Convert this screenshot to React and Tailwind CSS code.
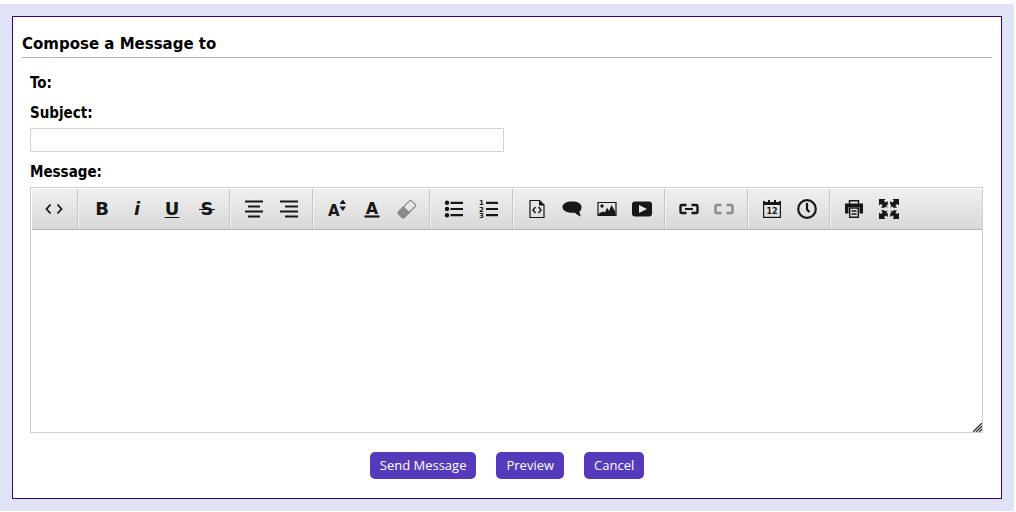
import React from "react";

const Icon = ({ children }) => (
  <svg viewBox="0 0 20 20" width="20" height="20" fill="none" stroke="currentColor" aria-hidden="true">
    {children}
  </svg>
);

const solid = { fill: "currentColor", stroke: "none" };

const arrow = "M0 0h6.500L5 1.800 6.600 3.600 8.800 2V5.500L7.500 6.500 8.800 8.800 6.500 7.500 5.500 8.800H2L3.600 6.600 1.800 5 0 6.500z";

const icons = {
  source: (
    <Icon>
      <path d="M6.500 5.500L2.500 10l4 4.500M13.500 5.500L17.500 10l-4 4.500" strokeWidth="1.800" />
    </Icon>
  ),
  center: (
    <Icon>
      <path d="M1 2.500h18M4 7.500h12M1 12.500h18M4 17.500h12" strokeWidth="2.200" />
    </Icon>
  ),
  right: (
    <Icon>
      <path d="M1 2.500h18M6 7.500h13M1 12.500h18M6 17.500h13" strokeWidth="2.200" />
    </Icon>
  ),
  size: (
    <Icon>
      <text x="1" y="17" {...solid} className="font-['DejaVu_Sans'] text-[15px] font-bold">A</text>
      <path d="M12.500 5l3.300-4.500L19 5zM12.500 7.500H19L15.800 12z" {...solid} />
    </Icon>
  ),
  color: (
    <Icon>
      <text x="10" y="15" textAnchor="middle" {...solid} className="font-['DejaVu_Sans'] text-[16px] font-bold">A</text>
      <path d="M2.500 17.500h15" strokeWidth="2.200" />
    </Icon>
  ),
  eraser: (
    <Icon>
      <g transform="rotate(-45 10 10)">
        <rect x="0.500" y="6" width="18.500" height="8" rx="1.800" strokeWidth="1.200" />
        <path d="M2.300 5.400H9.500v9.200H2.300Q0 14.600 0 12.500v-5Q0 5.400 2.300 5.400z" {...solid} />
      </g>
    </Icon>
  ),
  bullets: (
    <Icon>
      <path d="M6.500 3.800h12.500M6.500 10h12.500M6.500 16.200h12.500" strokeWidth="2.200" />
      <g {...solid}>
        <circle cx="3" cy="3.800" r="2.200" />
        <circle cx="3" cy="10" r="2.200" />
        <circle cx="3" cy="16.200" r="2.200" />
      </g>
    </Icon>
  ),
  numbers: (
    <Icon>
      <path d="M7 3.800h12M7 10h12M7 16.200h12" strokeWidth="2.200" />
      <g {...solid} className="font-['DejaVu_Sans'] text-[7px] font-bold">
        <text x="0" y="6">1</text>
        <text x="0" y="12.500">2</text>
        <text x="0" y="19">3</text>
      </g>
    </Icon>
  ),
  code: (
    <Icon>
      <path d="M3 1.500h9.500l4.500 4.500v12.500H3z" strokeWidth="1.200" />
      <path d="M12 1v5.500h5.500z" {...solid} />
      <path d="M8.500 8L6 11l2.500 3M11.500 8l2.500 3-2.500 3" strokeWidth="1.400" />
    </Icon>
  ),
  quote: (
    <Icon>
      <path d="M10 2.500c5.500 0 9.500 2 9.500 5.500 0 2-.7 3.500-2 4.500.2 2 .8 3.500 1.500 5-2.500-.7-4.500-2-6-3.700C6 14.300.5 12 .5 8c0-3.500 4-5.500 9.500-5.500z" {...solid} />
    </Icon>
  ),
  image: (
    <Icon>
      <path d="M1 3.500h18v13H1z" strokeWidth="1.200" />
      <circle cx="5" cy="7" r="1.700" {...solid} />
      <path d="M1.500 16v-1l2-1.500 3-1 1.500 1L10 8.500l2 3.500 2.500-6 4 7V16z" {...solid} />
    </Icon>
  ),
  video: (
    <Icon>
      <path fillRule="evenodd" d="M3 2.500h14a3 3 0 013 3v9a3 3 0 01-3 3H3a3 3 0 01-3-3v-9a3 3 0 013-3zM7 6v8l8-4z" {...solid} />
    </Icon>
  ),
  link: (
    <Icon>
      <path d="M7.500 6H3Q1.500 6 1.500 7.500v5Q1.500 14 3 14h4.500M12.500 6H17q1.500 0 1.500 1.500v5q0 1.500-1.500 1.500h-4.500" strokeWidth="2.400" />
      <path d="M6 10h8" strokeWidth="2" />
    </Icon>
  ),
  unlink: (
    <Icon>
      <path d="M7.500 6H3Q1.500 6 1.500 7.500v5Q1.500 14 3 14h4.500M12.500 6H17q1.500 0 1.500 1.500v5q0 1.500-1.500 1.500h-4.500" strokeWidth="2.400" />
    </Icon>
  ),
  date: (
    <Icon>
      <path d="M1.600 5v13.400h16.800V5" strokeWidth="1.200" />
      <path d="M1 2h2v1h3V1h2v2h4V1h2v2h3V2h2v4H1z" {...solid} />
      <text x="10" y="15" textAnchor="middle" {...solid} className="font-['DejaVu_Sans'] text-[8px] font-bold">12</text>
    </Icon>
  ),
  time: (
    <Icon>
      <circle cx="10" cy="10" r="8.800" strokeWidth="2.200" />
      <path d="M10 4v6.500l2.500 2.500" strokeWidth="2.200" />
    </Icon>
  ),
  print: (
    <Icon>
      <path d="M5.500 5V1.700h9V5" strokeWidth="1.400" />
      <path d="M1 4.500h18v10h-3.500V8h-11v6.500H1z" {...solid} />
      <path d="M5.700 9h8.600v9.300H5.700zM7.500 12h5M7.500 15h5" strokeWidth="1.400" />
    </Icon>
  ),
  maximize: (
    <Icon>
      <g {...solid}>
        <path d={arrow} />
        <path d={arrow} transform="rotate(90 10 10)" />
        <path d={arrow} transform="rotate(180 10 10)" />
        <path d={arrow} transform="rotate(270 10 10)" />
      </g>
    </Icon>
  ),
};

const groups = [
  { width: "w-[46px] pr-0.5", items: [["View source", icons.source]] },
  {
    width: "w-[152px] pl-0.5",
    items: [
      ["Bold", <span className="text-lg font-bold">B</span>],
      ["Italic", <span className="text-lg font-bold italic">i</span>],
      ["Underline", <span className="text-lg font-bold underline decoration-1 underline-offset-2">U</span>],
      ["Strikethrough", (
        <span className="relative text-lg font-bold">
          S<span className="absolute -inset-x-0.5 top-1/2 h-px bg-current" />
        </span>
      )],
    ],
  },
  { width: "w-[83px]", items: [["Center", icons.center], ["Align right", icons.right]] },
  { width: "w-[117px] pl-0.5", items: [["Font size", icons.size], ["Font color", icons.color], ["Remove formatting", icons.eraser, true]] },
  { width: "w-[83px]", items: [["Bullet list", icons.bullets], ["Ordered list", icons.numbers]] },
  { width: "w-[152px] pl-0.5", items: [["Code", icons.code], ["Quote", icons.quote], ["Insert image", icons.image], ["Insert video", icons.video]] },
  { width: "w-[83px]", items: [["Insert link", icons.link], ["Unlink", icons.unlink, true]] },
  { width: "w-[82px] pl-0.5", items: [["Insert date", icons.date], ["Insert time", icons.time]] },
  { width: "w-[82px]", items: [["Print", icons.print], ["Maximize", icons.maximize]] },
];

function Toolbar() {
  return (
    <div role="toolbar" aria-label="Formatting" className="flex flex-wrap rounded-t border-b border-[#b3b3b3] bg-linear-to-b from-[#f0f0f0] to-[#d8d8d8]">
      {groups.map((group, index) => (
        <div
          key={index}
          className={`flex h-10 justify-center border-r border-[#c5c5c5] shadow-[1px_0_0_#f5f5f5] last:border-r-0 last:shadow-none ${group.width}`}
        >
          {group.items.map(([name, glyph, dim]) => (
            <button
              key={name}
              type="button"
              aria-label={name}
              className={`flex w-[35px] shrink-0 items-center justify-center ${dim ? "text-[#8a8a8a]" : "text-[#171717]"}`}
            >
              {glyph}
            </button>
          ))}
        </div>
      ))}
    </div>
  );
}

function ActionButton({ children, type = "button" }) {
  return (
    <button type={type} className="h-[27px] rounded-[5px] bg-[#553abb] px-2.5 font-['Open_Sans',sans-serif] text-[13px] text-white">
      {children}
    </button>
  );
}

export default function App() {
  return (
    <div className="mt-1 mr-0.5 bg-[#e0e3f6] p-3 font-['DejaVu_Sans',sans-serif] text-black">
      <form className="border border-[#330099] bg-white px-[9px] pt-[15px] pb-[19px]" onSubmit={(event) => event.preventDefault()}>
        <h1 className="border-b border-[#b8b8b8] pb-px text-[15px] leading-6 font-bold">
          Compose a Message to
        </h1>
        <div className="pr-[9px] pl-2 text-[15px] leading-5 font-bold">
          <p className="mt-[15px] font-['DejaVu_Sans_Condensed','DejaVu_Sans',sans-serif]">To:</p>
          <label htmlFor="subject" className="mt-2.5 block font-['DejaVu_Sans_Condensed','DejaVu_Sans',sans-serif]">Subject:</label>
          <input id="subject" type="text" className="mt-[5px] block h-6 w-[474px] max-w-full border border-[#d3d3d3] bg-white px-1 font-normal outline-none" />
          <label htmlFor="message" className="mt-2.5 block font-['DejaVu_Sans_Condensed','DejaVu_Sans',sans-serif]">Message:</label>
          <div className="relative mt-[5px] border border-[#d0d0d0] pt-px pl-px">
            <Toolbar />
            <textarea id="message" className="block h-[202px] w-full resize-none bg-white p-2 font-normal outline-none" />
            <svg className="absolute right-0 bottom-0 text-[#333]" width="9" height="9" viewBox="0 0 9 9" stroke="currentColor" aria-hidden="true">
              <path d="M0 9L9 0M3 9l6-6M6 9l3-3" strokeWidth="1.400" />
            </svg>
          </div>
        </div>
        <div className="mt-[19px] flex flex-wrap justify-center gap-5">
          <ActionButton type="submit">Send Message</ActionButton>
          <ActionButton>Preview</ActionButton>
          <ActionButton>Cancel</ActionButton>
        </div>
      </form>
    </div>
  );
}
